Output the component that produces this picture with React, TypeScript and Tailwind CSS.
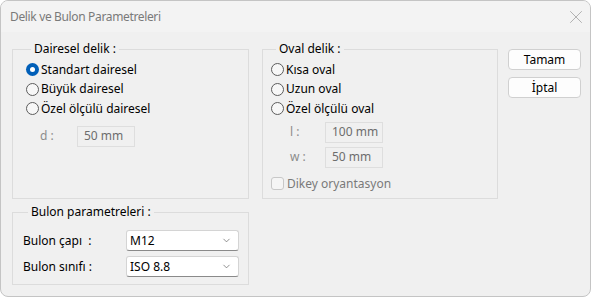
import { ChevronDown, X } from "lucide-react";

const FONT = "font-['Segoe_UI','Noto_Sans',sans-serif]";

function Radio({ label, checked = false }: { label: string; checked?: boolean }) {
  return (
    <div className="flex items-center h-[19.5px]">
      {checked ? (
        <span className="w-[13px] h-[13px] rounded-full bg-[#005fb8] flex items-center justify-center">
          <span className="w-[5px] h-[5px] rounded-full bg-white" />
        </span>
      ) : (
        <span className="w-[13px] h-[13px] rounded-full border border-[#5c5c5c] bg-[#f7f7f7]" />
      )}
      <span className="ml-[2px] text-[12px] text-black leading-none">{label}</span>
    </div>
  );
}

function DisabledField({ label, value, labelWidth }: { label: string; value: string; labelWidth: string }) {
  return (
    <div className="flex items-center">
      <span className={`${labelWidth} text-[12px] text-[#8c8c8c]`}>{label}</span>
      <div className="w-[58px] h-[21px] border border-[#dedede] bg-[#f0f0f0] pl-[6px] flex items-center text-[12px] text-[#6d6d6d]">
        {value}
      </div>
    </div>
  );
}

function Combo({ value }: { value: string }) {
  return (
    <div className="w-[113px] h-[21px] bg-white border border-[#d4d4d4] border-b-[#8a8a8a] rounded-[3px] flex items-center justify-between pl-[3px] pr-[6px]">
      <span className="text-[12px] text-black">{value}</span>
      <ChevronDown className="w-[11px] h-[11px] text-[#5f5f5f]" strokeWidth={1.5} />
    </div>
  );
}

function Group({ title, className, children }: { title: string; className: string; children: React.ReactNode }) {
  return (
    <fieldset className={`border border-[#dcdcdc] ${className}`}>
      <legend className="ml-[5px] px-[3px] text-[12px] text-black leading-[16px]">{title}</legend>
      {children}
    </fieldset>
  );
}

export default function App() {
  return (
    <div className={`w-[593px] h-[299px] bg-white ${FONT}`}>
      <div className="w-[591px] h-[297px] rounded-[8px] border border-[#c4c4c4] bg-[#f0f0f0] overflow-hidden flex flex-col">
        <div className="h-[31px] bg-[#f3f3f3] flex items-center justify-between pl-[9px] pr-[3px] shrink-0">
          <span className="text-[12px] text-[#7a7a7a] tracking-[-0.35px]">Delik ve Bulon Parametreleri</span>
          <X className="w-[22px] h-[22px] text-[#7a7a7a]" strokeWidth={0.6} />
        </div>

        <div className="flex pl-[11px] pt-[9px]">
          <div className="w-[237px] flex flex-col">
            <Group title="Dairesel delik :" className="h-[158px] pl-[13px] pt-[3px]">
              <Radio label="Standart dairesel" checked />
              <Radio label="Büyük dairesel" />
              <Radio label="Özel ölçülü dairesel" />
              <div className="pl-[14px] mt-[7px]">
                <DisabledField label="d :" value="50 mm" labelWidth="w-[37px]" />
              </div>
            </Group>

            <Group title="Bulon parametreleri :" className="mt-[5px] h-[81px] pl-[10px] pt-[10px]">
              <div className="flex items-center">
                <span className="w-[103px] text-[12px] text-black">Bulon çapı&nbsp; :</span>
                <Combo value="M12" />
              </div>
              <div className="flex items-center mt-[5px]">
                <span className="w-[103px] text-[12px] text-black">Bulon sınıfı :</span>
                <Combo value="ISO 8.8" />
              </div>
            </Group>
          </div>

          <Group title="Oval delik :" className="ml-[13px] w-[236px] h-[158px] pl-[8px] pt-[3px]">
            <Radio label="Kısa oval" />
            <Radio label="Uzun oval" />
            <Radio label="Özel ölçülü oval" />
            <div className="pl-[19px] mt-[3px] flex flex-col gap-[4px]">
              <DisabledField label="l :" value="100 mm" labelWidth="w-[35px]" />
              <DisabledField label="w :" value="50 mm" labelWidth="w-[35px]" />
            </div>
            <div className="flex items-center mt-[7px]">
              <span className="w-[13px] h-[13px] rounded-[3px] border border-[#c8c8c8] bg-[#f5f5f5]" />
              <span className="ml-[3px] text-[12px] text-[#7a7a7a]">Dikey oryantasyon</span>
            </div>
          </Group>

          <div className="ml-[10px] pt-[8px] flex flex-col gap-[7px]">
            <button type="button" className="w-[73px] h-[21px] rounded-[4px] border border-[#d0d0d0] bg-[#fdfdfd] text-[12px] text-black">
              Tamam
            </button>
            <button type="button" className="w-[73px] h-[21px] rounded-[4px] border border-[#d0d0d0] bg-[#fdfdfd] text-[12px] text-black">
              İptal
            </button>
          </div>
        </div>
      </div>
    </div>
  );
}
